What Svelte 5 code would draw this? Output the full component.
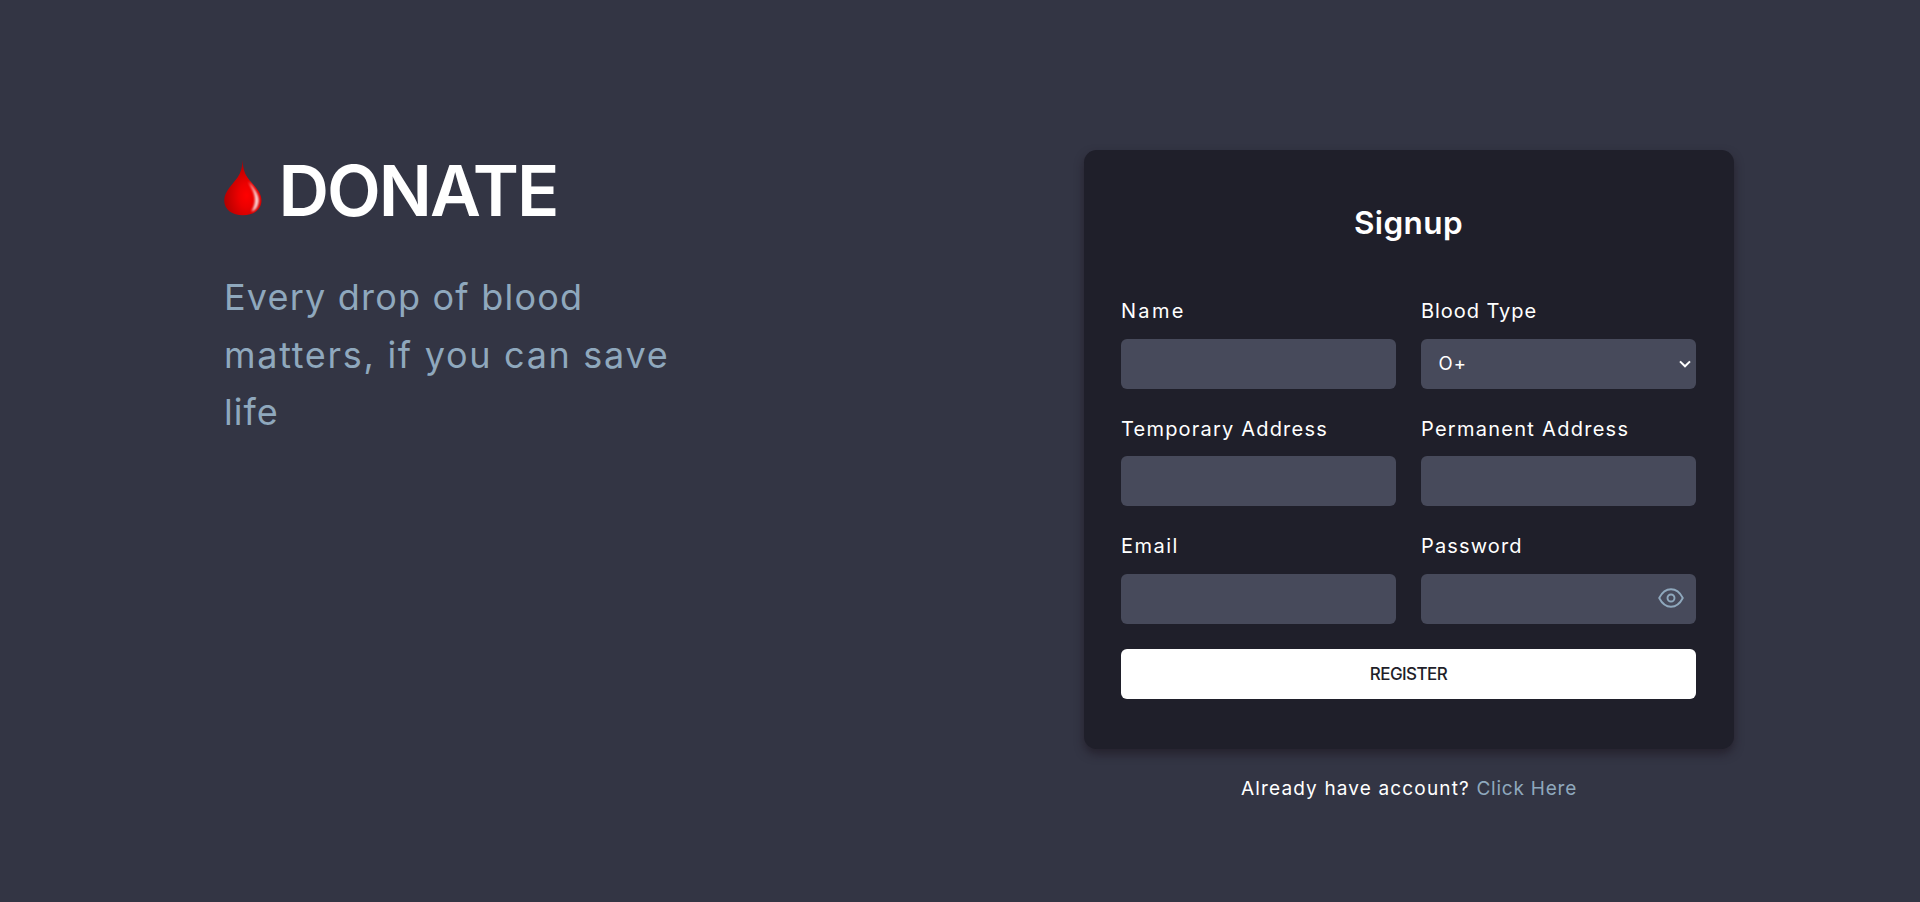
<script>
  let showPassword = $state(false);
  let bloodType = $state('O+');
  const bloodTypes = ['O+', 'O-', 'A+', 'A-', 'B+', 'B-', 'AB+', 'AB-'];

  const tagline = [
    { text: 'Every drop of blood', tracking: 1.2 },
    { text: 'matters, if you can save', tracking: 1.7 },
    { text: 'life', tracking: 1 }
  ];

  const fields = [
    { id: 'name', label: 'Name', type: 'text', tracking: 2.3 },
    { id: 'blood', label: 'Blood Type', type: 'select', tracking: 0.95 },
    { id: 'temporary', label: 'Temporary Address', type: 'text', tracking: 1.2 },
    { id: 'permanent', label: 'Permanent Address', type: 'text', tracking: 1.27 },
    { id: 'email', label: 'Email', type: 'email', tracking: 1.5 },
    { id: 'password', label: 'Password', type: 'password', tracking: 1.15 }
  ];
</script>

<main class="page">
  <section class="intro">
    <h1 class="brand">
      <svg class="drop" viewBox="0 0 38 56" aria-hidden="true">
        <defs>
          <radialGradient id="blood" cx="0.6" cy="0.64" r="0.62">
            <stop offset="0" stop-color="#ff0000" />
            <stop offset="0.35" stop-color="#ec0000" />
            <stop offset="1" stop-color="#b00000" />
          </radialGradient>
          <filter id="soft" x="-60%" y="-20%" width="220%" height="140%">
            <feGaussianBlur stdDeviation="1.1" />
          </filter>
        </defs>
        <path
          d="M18.6 0C18.9 7 20 12.500 23.500 17.500C28 24 37.500 31 37.500 40.500C37.500 50 29 55.300 18.800 55.300C8.500 55.300 0.200 50 0.200 40.500C0.200 31 9.500 23.500 13.500 17.500C17 12.500 18.300 7 18.600 0Z"
          fill="url(#blood)"
        />
        <path
          d="M24.500 21.500C29 27.500 35.300 34 34.700 41C34.300 46.500 31.500 50.500 27.500 51.500C30.500 46.500 31.300 42 30.800 37.500C30.200 31.500 27 27 24.500 21.500Z"
          fill="#fff"
          opacity="0.85"
          filter="url(#soft)"
        />
      </svg>
      <span>DONATE</span>
    </h1>
    <p class="tagline">
      {#each tagline as line}
        <span style:letter-spacing="{line.tracking}px">{line.text}</span>
      {/each}
    </p>
  </section>

  <section class="panel">
    <form class="card" onsubmit={(e) => e.preventDefault()}>
      <h2>Signup</h2>
      <div class="grid">
        {#each fields as field}
          <div class="field">
            <label for={field.id} style:letter-spacing="{field.tracking}px">{field.label}</label>
            <div class="control">
              {#if field.type === 'select'}
                <select id={field.id} bind:value={bloodType}>
                  {#each bloodTypes as type}
                    <option value={type}>{type}</option>
                  {/each}
                </select>
                <svg class="chevron" viewBox="0 0 12 8" aria-hidden="true">
                  <path d="M1 1.400L6 6.300L11 1.400" />
                </svg>
              {:else if field.type === 'password'}
                <input id={field.id} type={showPassword ? 'text' : 'password'} />
                <button class="eye" type="button" aria-label="Show password" onclick={() => (showPassword = !showPassword)}>
                  <svg viewBox="0 0 26 20">
                    <path d="M1.200 10C4 4.500 8 1.300 13 1.300S22 4.500 24.800 10C22 15.500 18 18.700 13 18.700S4 15.500 1.200 10Z" />
                    <circle cx="13" cy="10" r="3.500" />
                  </svg>
                </button>
              {:else}
                <input id={field.id} type={field.type} />
              {/if}
            </div>
          </div>
        {/each}
      </div>
      <button class="register" type="submit">REGISTER</button>
    </form>
    <p class="login"><span class="question">Already have account?</span><a href="#login">Click Here</a></p>
  </section>
</main>

<style>
  :global(body) {
    margin: 0;
    background: #333544;
  }

  .page {
    box-sizing: border-box;
    min-height: 902px;
    padding: 150px 186px 0 224px;
    display: flex;
    justify-content: space-between;
    align-items: flex-start;
    font-family: Inter, "Open Sans", sans-serif;
    color: #fff;
  }

  h1, h2, p {
    margin: 0;
  }

  .brand {
    display: flex;
    align-items: center;
    gap: 16.500px;
    height: 80px;
    font-size: 70px;
    line-height: 80px;
    font-weight: 600;
    letter-spacing: -2px;
  }

  .brand span {
    padding-top: 2px;
  }

  .drop {
    width: 38px;
    height: 56px;
    margin-bottom: 5px;
  }

  .tagline {
    display: flex;
    flex-direction: column;
    margin-top: 39px;
    color: #8fa8bd;
    font-size: 36px;
    line-height: 57.600px;
    white-space: nowrap;
  }

  .panel {
    width: 650px;
  }

  .card {
    box-sizing: border-box;
    height: 598.500px;
    padding: 48.400px 38px 50px 37px;
    border-radius: 12.500px;
    background: #1f1f2a;
    box-shadow: 0 5px 10px rgba(29, 22, 31, 0.6);
  }

  h2 {
    margin-bottom: 48px;
    font-size: 31.500px;
    line-height: 50px;
    font-weight: 600;
    letter-spacing: 0.400px;
    text-align: center;
  }

  .grid {
    display: grid;
    grid-template-columns: 1fr 1fr;
    gap: 25px;
  }

  .field {
    display: flex;
    flex-direction: column;
    gap: 12.500px;
  }

  label {
    height: 30px;
    font-size: 20px;
    line-height: 30px;
    white-space: nowrap;
  }

  .control {
    position: relative;
    height: 50px;
  }

  input,
  select {
    box-sizing: border-box;
    display: block;
    width: 100%;
    height: 50px;
    margin: 0;
    padding: 0 17.500px 1px;
    border: 0;
    border-radius: 6px;
    outline: 0;
    background: #474a5b;
    color: #fff;
    font: 400 18.500px/49px Inter, sans-serif;
    letter-spacing: 1px;
    appearance: none;
  }

  .chevron {
    position: absolute;
    right: 5px;
    top: 21.500px;
    width: 12px;
    height: 8px;
    fill: none;
    stroke: #fff;
    stroke-width: 2;
    pointer-events: none;
  }

  .eye {
    position: absolute;
    right: 12px;
    top: 14.500px;
    width: 26px;
    height: 20px;
    padding: 0;
    border: 0;
    background: none;
  }

  .eye svg {
    display: block;
    width: 26px;
    height: 20px;
    fill: none;
    stroke: #8fa8bd;
    stroke-width: 1.900;
    stroke-linejoin: round;
  }

  .register {
    display: block;
    width: 100%;
    height: 50px;
    margin-top: 25px;
    padding: 0;
    border: 0;
    border-radius: 6px;
    background: #fff;
    color: #1f1f2a;
    font: 500 17px/50px Inter, sans-serif;
    letter-spacing: -0.560px;
  }

  .login {
    display: flex;
    justify-content: center;
    gap: 6.500px;
    margin-top: 25.500px;
    font-size: 19px;
    line-height: 30px;
    white-space: nowrap;
  }

  .question {
    letter-spacing: 1.150px;
  }

  a {
    color: #8fa8bd;
    text-decoration: none;
    letter-spacing: 0.780px;
  }
</style>
